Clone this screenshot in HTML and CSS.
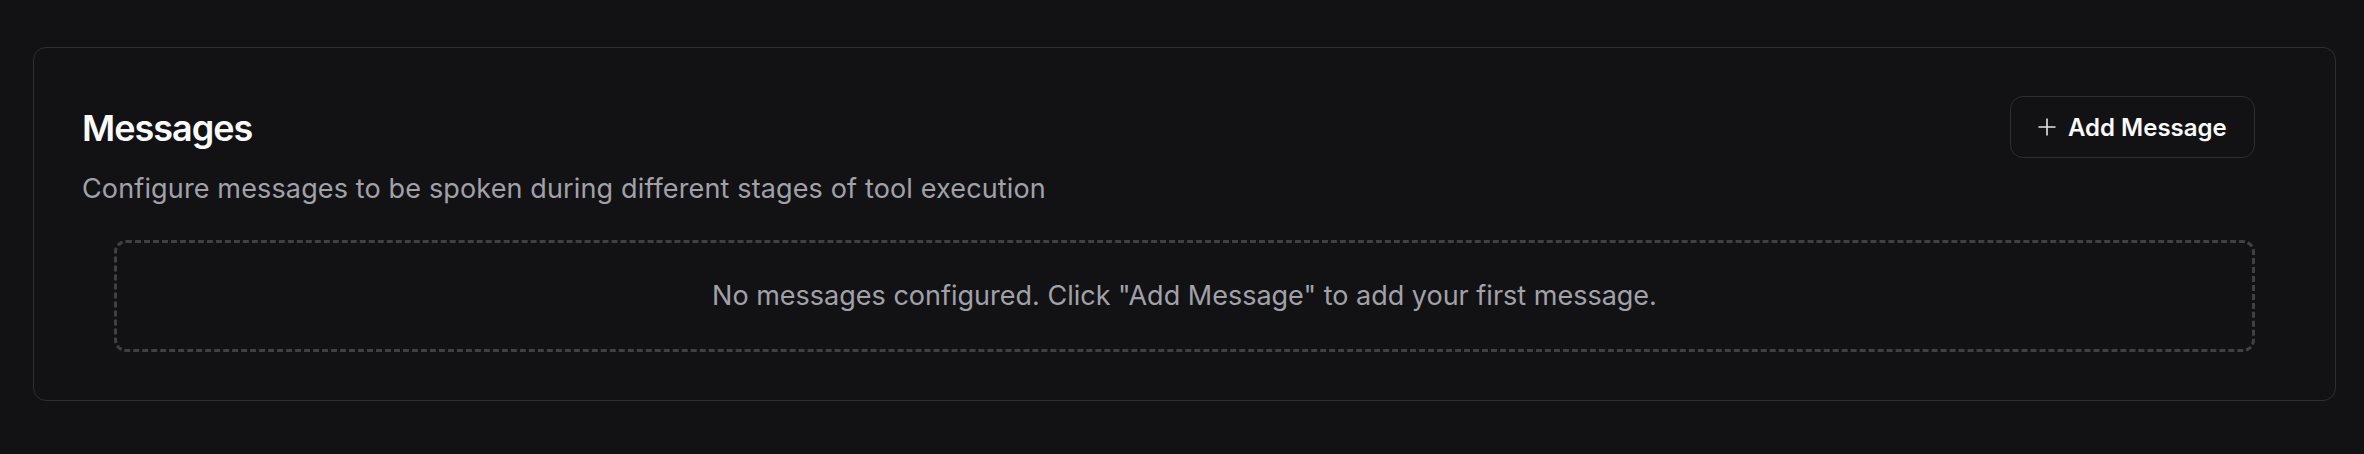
FILE: index.html
```html
<!DOCTYPE html>
<html lang="en">
<head>
  <meta charset="UTF-8">
  <title>Messages</title>
  <link rel="stylesheet" href="styles.css">
</head>
<body>
<!-- messages card -->
<div class="page">
  <div class="card">
    <div class="cardHead">
      <h2 class="title">Messages</h2>
      <button class="addBtn" type="button">
        <svg class="plus" width="18" height="18" viewBox="0 0 18 18">
          <path d="M9 0.5v17M0.5 9h17" stroke="#e4e4e7" stroke-width="1.6" fill="none"></path>
        </svg>
        <span>Add Message</span>
      </button>
    </div>
    <p class="desc">Configure messages to be spoken during different stages of tool execution</p>
    <div class="content">
      <div class="empty">No messages configured. Click "Add Message" to add your first message.</div>
    </div>
  </div>
</div>
</body>
</html>
```

FILE: styles.css
```css
:root {
  --bg: #121214;
  --border: #2e2e31;
  --dash: #404044;
  --white: #fafafa;
  --muted: #a1a1aa;
}
* {
  box-sizing: border-box;
  font-family: Inter, 'Noto Sans', sans-serif;
}
body {
  margin: 0;
  background-color: var(--bg);
}
.page {
  padding: 47px 28px 0 33px;
}
.card {
  border: 1px solid var(--border);
  border-radius: 13px;
  padding: 48px 0 48px 48px;
}
.cardHead {
  display: flex;
  align-items: center;
  justify-content: space-between;
  padding-right: 80px;
}
.title {
  margin: 2px 0 0 0;
  font-size: 36px;
  line-height: 54px;
  font-weight: 600;
  color: var(--white);
  letter-spacing: -1px;
}
.addBtn {
  display: flex;
  align-items: center;
  gap: 12px;
  height: 62px;
  width: 245px;
  padding: 0 0 0 27px;
  background-color: var(--bg);
  border: 1px solid var(--border);
  border-radius: 13px;
  color: var(--white);
  font-size: 24px;
  font-weight: 600;
  cursor: pointer;
}
.desc {
  margin: 11px 0 0 0;
  font-size: 27px;
  line-height: 40px;
  letter-spacing: 0.14px;
  color: var(--muted);
}
.content {
  padding: 31px 80px 0 32px;
}
.empty {
  border: 3px dashed var(--dash);
  border-radius: 12px;
  padding: 33px 0;
  text-align: center;
  font-size: 27px;
  line-height: 40px;
  color: var(--muted);
}
```
